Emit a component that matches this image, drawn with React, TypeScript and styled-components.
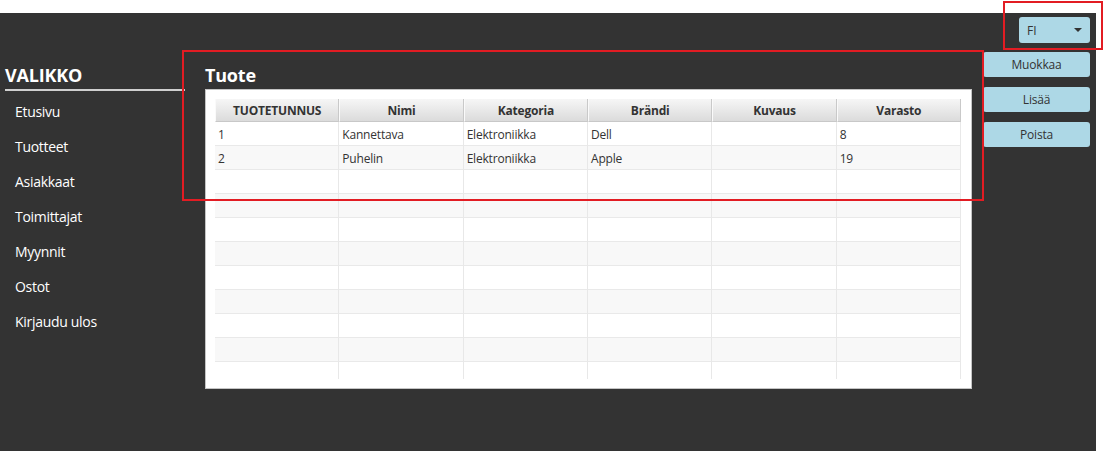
import React from "react";
import styled, { createGlobalStyle } from "styled-components";

const GlobalStyle = createGlobalStyle`
  html, body {
    margin: 0;
    padding: 0;
    background: #ffffff;
    font-family: "Open Sans", "Noto Sans", sans-serif;
  }
  * { box-sizing: border-box; }
`;

const Page = styled.div`
  position: relative;
  width: 1105px;
  height: 451px;
  padding-top: 13px;
  background: #ffffff;
  overflow: hidden;
`;

const Stage = styled.div`
  width: 1096px;
  height: 438px;
  background: #333333;
  display: grid;
  grid-template-columns: 205px 767px 124px;
  align-items: start;
`;

const Sidebar = styled.nav`
  padding: 51px 0 0 5px;
  display: flex;
  flex-direction: column;
`;

const SideTitle = styled.h2`
  margin: 0;
  width: 180px;
  font-size: 18px;
  line-height: 22px;
  font-weight: 700;
  color: #ffffff;
  padding-bottom: 3px;
  border-bottom: 2px solid #cfcfcf;
  letter-spacing: -0.2px;
`;

const MenuList = styled.ul`
  list-style: none;
  margin: 3px 0 0;
  padding: 0 0 0 10px;
`;

const MenuItem = styled.li`
  font-size: 14px;
  line-height: 35px;
  color: #ffffff;
  letter-spacing: -0.3px;
`;

const Main = styled.main`
  padding-top: 51px;
  display: flex;
  flex-direction: column;
  gap: 3px;
`;

const MainTitle = styled.h1`
  margin: 0;
  font-size: 18px;
  line-height: 22px;
  font-weight: 700;
  color: #ffffff;
  letter-spacing: -0.2px;
`;

const Panel = styled.section`
  width: 767px;
  height: 300px;
  background: #ffffff;
  border: 1px solid #c4c4c4;
  padding: 9px;
`;

const TableViewport = styled.div`
  width: 746px;
  height: 280px;
  overflow: hidden;
`;

const Grid = styled.div`
  display: grid;
  grid-template-columns: repeat(6, 1fr);
`;

const HeaderCell = styled.div`
  height: 23px;
  padding-top: 2px;
  line-height: 20px;
  text-align: center;
  font-size: 12px;
  font-weight: 700;
  color: #333333;
  background: linear-gradient(#f6f6f6, #dbdbdb);
  border-right: 1px solid #c9c9c9;
  border-left: 1px solid #fafafa;
  border-bottom: 1px solid #c8c8c8;
  letter-spacing: -0.2px;
`;

const Cell = styled.div<{ $alt: boolean }>`
  height: 24px;
  padding: 2px 0 0 3px;
  line-height: 21px;
  font-size: 12px;
  color: #333333;
  background: ${(p) => (p.$alt ? "#f8f8f8" : "#ffffff")};
  border-right: 1px solid #e8e8e8;
  border-bottom: 1px solid #e9e9e9;
  letter-spacing: -0.2px;
  white-space: nowrap;
`;

const RightColumn = styled.aside`
  padding: 4px 6px 0 0;
  display: flex;
  flex-direction: column;
  align-items: flex-end;
`;

const Select = styled.div`
  width: 71px;
  height: 26px;
  margin-bottom: 9px;
  border-radius: 3px;
  background: #add8e6;
  display: flex;
  align-items: center;
  justify-content: space-between;
  padding: 0 8px 0 8px;
  font-size: 12px;
  color: #333333;
`;

const Caret = styled.span`
  width: 0;
  height: 0;
  border-left: 4px solid transparent;
  border-right: 4px solid transparent;
  border-top: 4px solid #333333;
`;

const ButtonStack = styled.div`
  display: flex;
  flex-direction: column;
  gap: 10px;
`;

const ActionButton = styled.button`
  width: 107px;
  height: 25px;
  border: none;
  border-radius: 3px;
  background: #add8e6;
  font-family: "Open Sans", "Noto Sans", sans-serif;
  font-size: 12px;
  color: #333333;
  padding: 0;
  letter-spacing: -0.2px;
`;

const Highlight = styled.div<{ $l: number; $t: number; $w: number; $h: number }>`
  position: absolute;
  left: ${(p) => p.$l}px;
  top: ${(p) => p.$t}px;
  width: ${(p) => p.$w}px;
  height: ${(p) => p.$h}px;
  border: 2px solid #e21c23;
  pointer-events: none;
`;

const columns = ["TUOTETUNNUS", "Nimi", "Kategoria", "Brändi", "Kuvaus", "Varasto"];
const data: string[][] = [
  ["1", "Kannettava", "Elektroniikka", "Dell", "", "8"],
  ["2", "Puhelin", "Elektroniikka", "Apple", "", "19"],
];
const TOTAL_ROWS = 11;
const menu = ["Etusivu", "Tuotteet", "Asiakkaat", "Toimittajat", "Myynnit", "Ostot", "Kirjaudu ulos"];

export default function App() {
  const rows: string[][] = [];
  for (let i = 0; i < TOTAL_ROWS; i++) rows.push(data[i] ?? ["", "", "", "", "", ""]);
  return (
    <>
      <GlobalStyle />
      <Page>
        <Stage>
          <Sidebar>
            <SideTitle>VALIKKO</SideTitle>
            <MenuList>
              {menu.map((m) => (
                <MenuItem key={m}>{m}</MenuItem>
              ))}
            </MenuList>
          </Sidebar>
          <Main>
            <MainTitle>Tuote</MainTitle>
            <Panel>
              <TableViewport>
                <Grid>
                  {columns.map((c) => (
                    <HeaderCell key={c}>{c}</HeaderCell>
                  ))}
                  {rows.map((r, i) =>
                    r.map((v, j) => (
                      <Cell key={`${i}-${j}`} $alt={i % 2 === 1}>
                        {v}
                      </Cell>
                    ))
                  )}
                </Grid>
              </TableViewport>
            </Panel>
          </Main>
          <RightColumn>
            <Select>
              <span>FI</span>
              <Caret />
            </Select>
            <ButtonStack>
              <ActionButton>Muokkaa</ActionButton>
              <ActionButton>Lisää</ActionButton>
              <ActionButton>Poista</ActionButton>
            </ButtonStack>
          </RightColumn>
        </Stage>
        <Highlight $l={1003} $t={1} $w={100} $h={49} />
        <Highlight $l={182} $t={50} $w={802} $h={151} />
      </Page>
    </>
  );
}
